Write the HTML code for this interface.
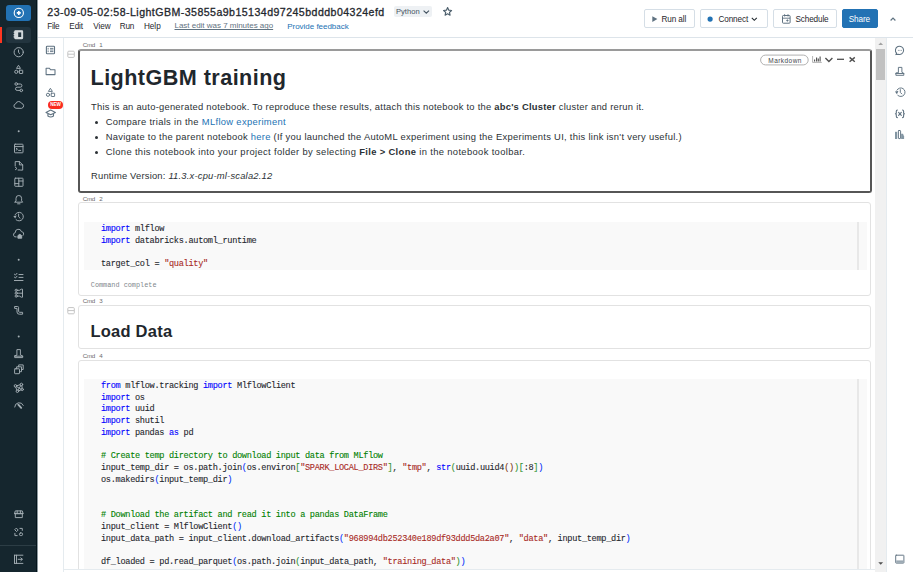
<!DOCTYPE html>
<html><head><meta charset="utf-8">
<style>
*{box-sizing:border-box;margin:0;padding:0}
html,body{width:913px;height:572px;overflow:hidden;background:#fff;font-family:"Liberation Sans",sans-serif;color:#1f272d}
.a{position:absolute}
.nw{white-space:nowrap}
#sb{left:0;top:0;width:37px;height:572px;background:#15262e}
#sbdark{left:36px;top:0;width:1px;height:572px;background:#04141b}
#sbedge{left:37px;top:0;width:1px;height:572px;background:#8c989e}
.ico{position:absolute;overflow:visible}
.ico *{fill:none;stroke:#8a989f;stroke-width:1;stroke-linecap:round;stroke-linejoin:round}
#hdr{left:38px;top:0;width:875px;height:38px;background:#fff;border-bottom:1px solid #dde4ea}
#lp{left:38px;top:38px;width:26px;height:534px;border-right:1px solid #e5ebef}
#rp{left:886px;top:38px;width:27px;height:534px;border-left:1px solid #e5ebef}
#track{left:875px;top:38px;width:11px;height:534px;background:#f1f1f1}
#thumb{left:876px;top:49px;width:9px;height:31px;background:#c1c1c1}
.btn{position:absolute;top:9px;height:19px;border:1px solid #d5dee6;border-radius:2px;background:#fff}
.bt{position:absolute;font-size:8.2px;color:#1f272d;white-space:nowrap;line-height:10px;letter-spacing:-0.14px}
.cmd{position:absolute;font-size:6.2px;color:#6b6b6b;white-space:nowrap;line-height:8px;letter-spacing:-0.3px}
.cmd i{font-style:normal;margin-left:4.3px}
.cell{position:absolute;left:78px;width:793px;border:1px solid #e2e2e2;border-radius:3px;background:#fff}
.code{position:absolute;left:84px;width:783px;background:#f9f9f9}
.vline{position:absolute;left:857px;width:1.5px;background:#e8e8e8}
pre{font-family:"Liberation Mono",monospace;font-size:8.6px;letter-spacing:-0.30px;line-height:11.74px;color:#1f272d;-webkit-text-stroke:0.1px currentColor;position:absolute;left:101px;white-space:pre}
.tx{font-size:9.4px;line-height:15px;color:#2b3135}
.lnk{color:#2272b4}
.mn{top:22.4px;font-size:8.2px;line-height:10px;color:#1f272d}
.bul{width:3.2px;height:3.2px;border-radius:50%;background:#2b3135}
.k{color:#0000ff}
.s{color:#a82a25}
.c{color:#008000}
.b1{color:#0431fa}
.b2{color:#319331}
.b3{color:#7b3814}
</style></head><body>
<!-- left sidebar -->
<div id="sb" class="a"></div>
<div id="sbdark" class="a"></div>
<div id="sbedge" class="a"></div>
<div class="a" style="left:6px;top:4.5px;width:25px;height:16.7px;background:#2272b4;border-radius:3px"></div>
<div class="a" style="left:0;top:27px;width:2px;height:16px;background:#ff3621"></div>
<div class="a" style="left:6px;top:27px;width:25px;height:16px;background:#22343e;border-radius:3px"></div>

<svg class="a" style="left:0;top:0" width="37" height="572" viewBox="0 0 37 572">
<g fill="none" stroke="#fff" stroke-width="1.1">
 <circle cx="18.8" cy="12.9" r="4.6"/>
</g>
<path d="M18.8,10.9 V14.9 M16.8,12.9 H20.8" stroke="#fff" stroke-width="1.6"/>
<g fill="none" stroke="#d3d9dc" stroke-width="1.1">
 <rect x="14.8" y="30.8" width="7.8" height="7.8" rx="0.6" fill="#d3d9dc"/>
 <rect x="18.2" y="32.4" width="3" height="4.6" fill="#22343e" stroke="none"/>
 <path d="M13.6,32.3 H15 M13.6,34.6 H15 M13.6,36.9 H15"/>
</g>
<g fill="none" stroke="#a3aeb4" stroke-width="0.95" stroke-linecap="round" stroke-linejoin="round">
 <!-- clock -->
 <circle cx="18.7" cy="52.2" r="4.6"/>
 <path d="M18.5,50 V52.4 L19.7,53.5"/>
 <!-- shapes -->
 <path d="M18.7,65.6 L20.5,68.4 H16.9 Z"/>
 <circle cx="16.3" cy="71.8" r="1.6"/>
 <rect x="19.4" y="70.2" width="3.3" height="3.3" rx="0.3"/>
 <!-- workflows -->
 <circle cx="16.2" cy="84" r="1.3"/>
 <circle cx="21.3" cy="90.4" r="1.3"/>
 <path d="M17.5,84 H20.3 A1.6,1.6 0 0 1 20.3,87.2 H17.1 A1.6,1.6 0 0 0 17.1,90.4 H20"/>
 <!-- cloud -->
 <path d="M15.7,108.2 A2.2,2.2 0 0 1 15.6,103.9 A3.2,3.2 0 0 1 21.6,103.4 A2.5,2.5 0 0 1 22,108.2 Z"/>
 <!-- terminal window -->
 <rect x="14.5" y="144.2" width="8.5" height="8.6" rx="0.6"/>
 <path d="M14.5,146.6 H23 M16.2,148.3 L17.5,149.2 L16.2,150.1 M18.6,150.4 H20.7"/>
 <!-- file code -->
 <path d="M15.2,166 V161.6 H19.4 L22.7,164.9 V170.1 H20.6 M19.4,161.6 V164.9 H22.7"/>
 <path d="M15.4,167.3 L17,168.5 L15.4,169.7 M18.1,170 H19.8"/>
 <!-- dashboard -->
 <rect x="14.8" y="178.2" width="8.2" height="8.1" rx="0.5"/>
 <path d="M18.8,178.2 V186.3 M14.8,183.6 H18.8 M18.8,181 H23"/>
 <!-- bell -->
 <path d="M15,202.2 H22.6 L21.6,200.8 V198.3 A2.8,2.8 0 0 0 16,198.3 V200.8 Z M17.6,203.8 H20"/>
 <!-- history -->
 <path d="M15.2,214.6 A4.3,4.3 0 1 1 16.1,219.8 M18.6,214 V216.8 L20.1,218.3"/>
 <!-- cloud home -->
 <path d="M16.2,237 A2.2,2.2 0 0 1 15.3,232.6 A3.1,3.1 0 0 1 21.4,231.6 A2.3,2.3 0 0 1 23.1,235.4"/>
 <path d="M17.9,237.9 V235.6 L19.8,234.3 L21.7,235.6 V237.9 Z" fill="#a3aeb4"/>
 <!-- checklist -->
 <path d="M14.4,274.2 L15.4,275.1 L17,273.3 M19,274.5 H23 M14.4,277.1 L15.4,278 L17,276.2 M19,277.4 H23 M14.4,280.5 H23"/>
 <!-- pipeline -->
 <circle cx="16.2" cy="290.3" r="1.1"/>
 <circle cx="16.2" cy="293.2" r="1.1"/>
 <circle cx="16.2" cy="296.1" r="1.1"/>
 <path d="M17.3,290.3 H19.5 L21.3,289.2 H22.5 V297.2 H21.3 L19.5,296.1 H17.3 M17.3,293.2 H22.5"/>
 <!-- s workflow -->
 <path d="M15,306.5 H17.6 A1,1 0 0 1 18.6,307.5 V311.3 A1,1 0 0 0 19.6,312.3 H22.6 V314.2 H19.4 A2.3,2.3 0 0 1 17,312 V308.4 H15 Z"/>
 <!-- flask -->
 <path d="M16.9,354.9 V349.6 H20.4 V354.9 L22.7,356 V357.6 H14.7 V356 Z M14.7,356.2 H22.7"/>
 <!-- models copy -->
 <rect x="14.6" y="368.8" width="4.9" height="4.9" rx="0.5"/>
 <path d="M16.6,368.8 V366.8 H21.5 V371.7 H19.5 M18.7,366.8 V364.9 H23.2 V369.5 H21.5"/>
 <!-- network -->
 <circle cx="15.5" cy="385.9" r="1.3"/>
 <circle cx="21.4" cy="384.5" r="1.3"/>
 <circle cx="22.2" cy="389.4" r="1.2"/>
 <circle cx="17.4" cy="391.2" r="1.3"/>
 <path d="M16.8,385.7 L20.1,384.8 M21.9,385.8 L22.1,388.2 M21,389.9 L18.7,390.8 M16.8,390 L15.8,387.2 M16.6,386.6 L21,389.2 M20.8,385.7 L18,390"/>
 <!-- serving -->
 <path d="M14.7,407 A4.5,4.5 0 0 1 23.3,405.4"/>
 <path d="M18.3,404.7 L21.2,407.8" stroke-width="1.9"/>
 <!-- store -->
 <path d="M15.3,513.4 V517.6 H22.3 V513.4 M14.6,513.4 L15.3,510.9 H22.3 L23,513.4 Z M14.6,513.4 H23 M17.2,510.9 V513.4 M20.4,510.9 V513.4"/>
 <!-- scan -->
 <path d="M16.6,528.4 L18.2,530 L16.6,531.6 L15,530 Z M19.9,528.4 H22.3 V530.4 M14.9,533.3 V535.6 H17.2"/>
 <rect x="19.4" y="532.9" width="3.2" height="2.7" rx="1.3"/>
 <!-- collapse -->
 <path d="M14.5,555.2 H22.9 M14.5,563.4 H22.9 M14.5,555.2 V563.4 M16.5,555.2 V563.4 M18.2,559.3 H22.2 M20.8,557.8 L22.3,559.3 L20.8,560.8"/>
</g>
<g fill="#a3aeb4">
 <path d="M13.3,216 L16.7,215.4 L15.2,218.6 Z"/>
 <circle cx="18.7" cy="131.2" r="1"/>
 <circle cx="18.7" cy="259.7" r="1"/>
 <circle cx="18.7" cy="336.6" r="1"/>
</g>
<rect x="0" y="545" width="36" height="1" fill="#2c3d45"/>
</svg>
<!-- header -->
<div id="hdr" class="a"></div>
<div class="a nw" style="left:47.3px;top:6px;font-size:10.6px;font-weight:normal;-webkit-text-stroke:0.3px #1f272d;line-height:13px;color:#1f272d;letter-spacing:0.45px">23-09-05-02:58-LightGBM-35855a9b15134d97245bdddb04324efd</div>
<div class="a nw mn" style="left:47.3px;letter-spacing:-0.3px">File</div>
<div class="a nw mn" style="left:69.3px;letter-spacing:-0.1px">Edit</div>
<div class="a nw mn" style="left:93.3px;letter-spacing:-0.1px">View</div>
<div class="a nw mn" style="left:119.8px;letter-spacing:-0.3px">Run</div>
<div class="a nw mn" style="left:143.9px;letter-spacing:0px">Help</div>
<div class="a nw" style="left:174.5px;top:21.3px;font-size:8px;line-height:10px;color:#5f7281;text-decoration:underline;letter-spacing:-0.02px">Last edit was 7 minutes ago</div>
<div class="a nw" style="left:287.2px;top:21.5px;font-size:8px;line-height:10px;color:#2272b4;letter-spacing:-0.02px">Provide feedback</div>
<div class="a" style="left:394px;top:6.3px;width:38.2px;height:10.7px;background:#eef1f4;border-radius:2px"></div>
<div class="a nw" style="left:396px;top:6.5px;font-size:7.6px;line-height:10px;color:#445461">Python</div>

<div class="btn" style="left:644px;width:51px"></div>
<div class="bt" style="left:661.6px;top:15px">Run all</div>
<div class="btn" style="left:699.5px;width:68.5px"></div>
<div class="bt" style="left:718.5px;top:15px">Connect</div>
<div class="btn" style="left:773.3px;width:63.5px"></div>
<div class="bt" style="left:795.5px;top:15px">Schedule</div>
<div class="btn" style="left:841.8px;width:36.4px;background:#2272b4;border-color:#2272b4"></div>
<div class="bt" style="left:848.8px;top:15px;color:#fff">Share</div>
<svg class="a" style="left:0;top:0" width="913" height="40" viewBox="0 0 913 40">
 <path d="M423.6,10.6 L426.3,13.2 L429,10.6" fill="none" stroke="#445461" stroke-width="1.1"/>
 <path d="M447.60,7.60 L448.78,10.18 L451.59,10.50 L449.50,12.42 L450.07,15.20 L447.60,13.80 L445.13,15.20 L445.70,12.42 L443.61,10.50 L446.42,10.18 Z" fill="none" stroke="#4d5f6c" stroke-width="1.15" stroke-linejoin="round"/>
 <path d="M652.3,16.3 L657.4,19.1 L652.3,21.9 Z" fill="#5f7281"/>
 <circle cx="710.1" cy="19.1" r="2.6" fill="#2272b4"/>
 <path d="M751.8,17.9 L754.3,20.3 L756.8,17.9" fill="none" stroke="#1f272d" stroke-width="1.1"/>
 <rect x="782.5" y="15.5" width="7.6" height="7.7" rx="0.8" fill="none" stroke="#5f7281" stroke-width="1"/>
 <path d="M782.5,18.2 H790.1 M784.6,14.2 V16.5 M788,14.2 V16.5 M787.4,19.4 V21.6 M786.3,20.5 H788.5" fill="none" stroke="#5f7281" stroke-width="0.9"/>
 <path d="M890.6,20.5 L893,18.1 L895.4,20.5" fill="none" stroke="#5f7281" stroke-width="1.2"/>
</svg>

<!-- left panel -->
<div id="lp" class="a"></div>
<!-- right panel -->
<div id="track" class="a"></div>
<div id="thumb" class="a"></div>
<div id="rp" class="a"></div>


<!-- cell 1 -->
<div class="cmd" style="left:82.8px;top:41.1px">Cmd<i>1</i></div>
<div class="a" style="left:77.5px;top:48.5px;width:794px;height:144.5px;border:2px solid #565656;border-top-color:#9a9a9a;border-radius:3px"></div>
<div class="a nw" style="left:90.5px;top:64.9px;font-size:21.6px;font-weight:bold;line-height:26px;color:#1f272d;letter-spacing:0.45px">LightGBM training</div>
<div class="a nw tx" style="left:91px;top:98.9px;letter-spacing:0.244px">This is an auto-generated notebook. To reproduce these results, attach this notebook to the <b>abc's Cluster</b> cluster and rerun it.</div>
<div class="a bul" style="left:94.5px;top:120.8px"></div>
<div class="a nw tx" style="left:105.7px;top:113.9px;letter-spacing:0.32px">Compare trials in the <span class="lnk">MLflow experiment</span></div>
<div class="a bul" style="left:94.5px;top:135.7px"></div>
<div class="a nw tx" style="left:105.7px;top:128.8px;letter-spacing:0.282px">Navigate to the parent notebook <span class="lnk">here</span> (If you launched the AutoML experiment using the Experiments UI, this link isn't very useful.)</div>
<div class="a bul" style="left:94.5px;top:150.7px"></div>
<div class="a nw tx" style="left:105.7px;top:143.8px;letter-spacing:0.354px">Clone this notebook into your project folder by selecting <b>File &gt; Clone</b> in the notebook toolbar.</div>
<div class="a nw tx" style="left:91px;top:167.7px;letter-spacing:0.2px">Runtime Version: <i>11.3.x-cpu-ml-scala2.12</i></div>

<!-- cell 2 -->
<div class="cmd" style="left:82.8px;top:195.1px">Cmd<i>2</i></div>
<div class="cell" style="top:202px;height:94px"></div>
<div class="code" style="top:222px;height:48px"></div>
<div class="vline" style="top:222px;height:48px"></div>
<pre style="top:224px;line-height:11.5px"><span class="k">import</span> mlflow
<span class="k">import</span> databricks.automl_runtime

target_col = <span class="s">"quality"</span></pre>
<div class="a nw" style="left:90.8px;top:281.4px;font-family:'Liberation Mono',monospace;font-size:6.85px;line-height:8px;color:#7f878c">Command complete</div>

<!-- cell 3 -->
<div class="cmd" style="left:82.8px;top:297.3px">Cmd<i>3</i></div>
<div class="cell" style="top:305px;height:44px"></div>
<div class="a nw" style="left:90.4px;top:320.9px;font-size:16.5px;font-weight:bold;line-height:20px;color:#1f272d;letter-spacing:0.24px">Load Data</div>

<!-- cell 4 -->
<div class="cmd" style="left:82.8px;top:352.3px">Cmd<i>4</i></div>
<div class="cell" style="top:360px;height:230px"></div>
<div class="code" style="top:378.7px;height:200px"></div>
<div class="vline" style="top:378.7px;height:200px"></div>
<pre style="top:381px"><span class="k">from</span> mlflow.tracking <span class="k">import</span> MlflowClient
<span class="k">import</span> os
<span class="k">import</span> uuid
<span class="k">import</span> shutil
<span class="k">import</span> pandas <span class="k">as</span> pd

<span class="c"># Create temp directory to download input data from MLflow</span>
input_temp_dir = os.path.join<span class="b1">(</span>os.environ<span class="b2">[</span><span class="s">"SPARK_LOCAL_DIRS"</span><span class="b2">]</span>, <span class="s">"tmp"</span>, <span class="k">str</span><span class="b2">(</span>uuid.uuid4<span class="b3">()</span><span class="b2">)[</span>:8<span class="b2">]</span><span class="b1">)</span>
os.makedirs<span class="b1">(</span>input_temp_dir<span class="b1">)</span>


<span class="c"># Download the artifact and read it into a pandas DataFrame</span>
input_client = MlflowClient<span class="b1">()</span>
input_data_path = input_client.download_artifacts<span class="b1">(</span><span class="s">"968994db252340e189df93ddd5da2a07"</span>, <span class="s">"data"</span>, input_temp_dir<span class="b1">)</span>

df_loaded = pd.read_parquet<span class="b1">(</span>os.path.join<span class="b2">(</span>input_data_path, <span class="s">"training_data"</span><span class="b2">)</span><span class="b1">)</span></pre>
<svg class="a" style="left:0;top:38px" width="913" height="534" viewBox="0 38 913 534">
<g fill="none" stroke="#5f7281" stroke-width="0.95" stroke-linecap="round" stroke-linejoin="round">
 <!-- TOC -->
 <rect x="46.4" y="46.3" width="8.1" height="7.4" rx="0.8" stroke-width="1.1"/>
 <path d="M50.4,48.4 H53 M50.4,50 H53 M50.4,51.6 H53 M48,48.4 H48.3 M48,50 H48.3 M48,51.6 H48.3" stroke-width="0.9"/>
 <!-- folder -->
 <path d="M46.1,68.3 H49.5 L50.5,69.7 H55 V74.6 H46.1 Z" stroke-width="1.05"/>
 <!-- shapes -->
 <path d="M50.6,88.6 L52.4,91.4 H48.8 Z"/>
 <circle cx="48" cy="94.8" r="1.6"/>
 <rect x="51.2" y="93.2" width="3.4" height="3.3" rx="0.3"/>
 <!-- grad cap -->
 <path d="M46,112.4 L50.7,110.1 L55.4,112.4 L50.7,114.7 Z M47.9,113.5 V116 Q50.7,117.9 53.5,116 V113.5" stroke-width="1.1"/>
 <!-- right panel: comment -->
 <path d="M896.6,53.2 A4.1,4.1 0 1 1 898.2,54.2 L895.9,54.6 Z" stroke-width="1.05"/>
 <path d="M898.3,50.4 H898.5 M899.8,50.4 H900 M901.3,50.4 H901.5" stroke-width="0.7"/>
 <!-- flask -->
 <path d="M898.4,72.3 V67.4 H901.9 V72.3 L903.8,73.3 V75.3 H895.9 V73.3 Z M895.9,73.5 H903.8"/>
 <!-- history -->
 <path d="M896.9,90.2 A4.3,4.3 0 1 1 897.8,95.4 M900.3,89.6 V92.4 L901.8,93.9"/>
 <!-- (x) -->
 <path d="M897.4,110 Q896.3,110 896.3,111.3 V112.9 Q896.3,113.8 895.4,113.8 Q896.3,113.8 896.3,114.7 V116.3 Q896.3,117.6 897.4,117.6 M902.5,110 Q903.6,110 903.6,111.3 V112.9 Q903.6,113.8 904.5,113.8 Q903.6,113.8 903.6,114.7 V116.3 Q903.6,117.6 902.5,117.6 M898.6,112.3 L901.3,115.3 M901.3,112.3 L898.6,115.3" stroke-width="1.1"/>
 <!-- chart -->
 <rect x="898.4" y="130.5" width="2.2" height="8.1" rx="0.6"/>
 <!-- bottom layout icon -->
 <rect x="895.7" y="555.2" width="8.2" height="7.9" rx="0.5"/>
</g>
<rect x="896.2" y="560.4" width="7.2" height="2.4" fill="#9aa8b2"/>
<path d="M895,131.8 H897.2 V139 H895 Z" fill="#8396a3"/>
<path d="M901.1,133.7 H903 L904.1,136.5 V139 H901.1 Z" fill="#8396a3"/>
<path d="M895,91.6 L898.4,91 L896.9,94.2 Z" fill="#5f7281"/>
<!-- collapse icons -->
<g fill="none" stroke="#c4c4c4" stroke-width="1">
 <rect x="67.8" y="51.2" width="6.5" height="6.2" rx="1"/>
 <path d="M68,54.2 H74"/>
 <rect x="67.8" y="307.6" width="6.5" height="6.2" rx="1"/>
 <path d="M68,310.6 H74"/>
</g>
<!-- scrollbar arrows -->
<path d="M878.3,45 L880.7,42.5 L883.1,45 Z" fill="#a3a3a3"/>
<path d="M878.3,562.3 L880.7,564.8 L883.1,562.3 Z" fill="#505050"/>
<!-- markdown toolbar -->
<rect x="760.6" y="55.1" width="47.6" height="9.8" rx="4.9" fill="#fff" stroke="#a8a8a8" stroke-width="0.9"/>
<g fill="none" stroke="#4f4f4f" stroke-width="1">
 <path d="M812.6,56 V62.4 H821.8" stroke="#a0a0a0" stroke-width="0.8"/>
 <path d="M814.6,61.6 V59.5 M816.6,61.6 V57.4 M818.3,61.6 V58.6 M820.1,61.6 V56.6" stroke-width="1.1"/>
 <path d="M825.4,58 L828.9,61.4 L832.4,58" stroke-width="1.4"/>
 <path d="M837,59.3 H844" stroke-width="1.3"/>
 <path d="M849.6,57.4 L854.8,61.8 M854.8,57.4 L849.6,61.8" stroke-width="1.4"/>
</g>
</svg>
<div class="a nw" style="left:768.3px;top:55.8px;font-size:6.5px;line-height:9px;color:#3f474c;letter-spacing:0.45px">Markdown</div>
<div class="a" style="left:48.4px;top:100.9px;width:14.6px;height:8.1px;background:#fa2b1f;border-radius:4.05px"></div>
<div class="a nw" style="left:50.2px;top:102.3px;font-size:4.6px;font-weight:bold;line-height:6px;color:#fff;letter-spacing:0px">NEW</div>
<div class="a" style="left:64px;top:569px;width:811px;height:3px;background:#fff;border-top:1px solid #e5ebef"></div>
</body></html>
